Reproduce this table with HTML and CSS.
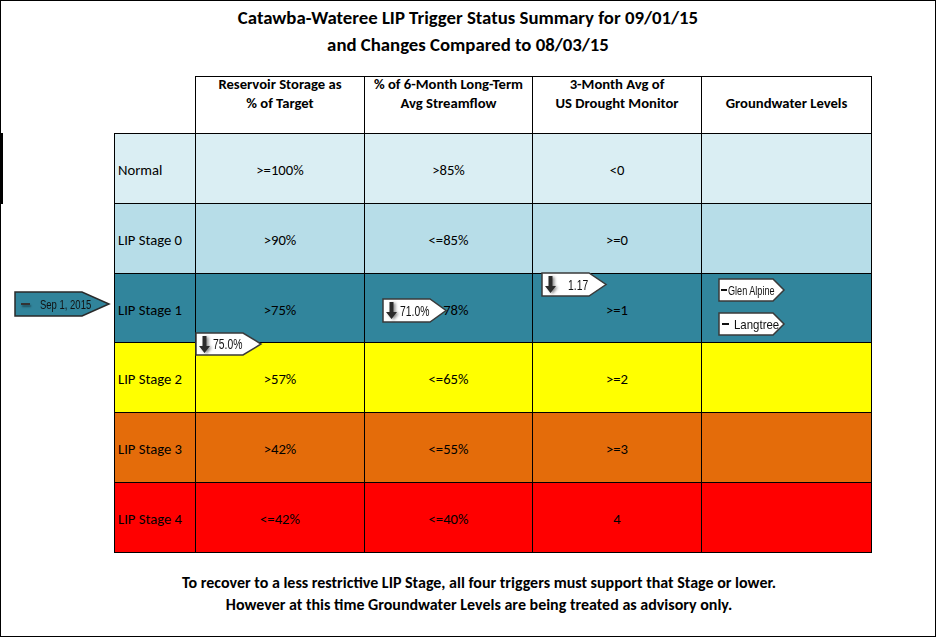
FILE: index.html
```html
<!DOCTYPE html>
<html>
<head>
<meta charset="utf-8">
<link rel="stylesheet" href="styles.css">
</head>
<body>
<div class="frame">
  <div class="edge-mark"></div>
  <h1 class="title">Catawba-Wateree LIP Trigger Status Summary for 09/01/15<br>and Changes Compared to 08/03/15</h1>
  <table class="grid">
    <colgroup>
      <col class="c-label"><col class="c-a"><col class="c-b"><col class="c-c"><col class="c-d">
    </colgroup>
    <tr class="head">
      <th class="corner"></th>
      <th><div class="hl">Reservoir Storage as<br>% of Target</div></th>
      <th><div class="hl">% of 6-Month Long-Term<br>Avg Streamflow</div></th>
      <th><div class="hl">3-Month Avg of<br>US Drought Monitor</div></th>
      <th><div class="hl"><br>Groundwater Levels</div></th>
    </tr>
    <tr class="r normal"><td class="lbl">Normal</td><td>&gt;=100%</td><td>&gt;85%</td><td>&lt;0</td><td></td></tr>
    <tr class="r s0"><td class="lbl">LIP Stage 0</td><td>&gt;90%</td><td>&lt;=85%</td><td>&gt;=0</td><td></td></tr>
    <tr class="r s1"><td class="lbl">LIP Stage 1</td><td>&gt;75%</td><td>&lt;=78%</td><td>&gt;=1</td><td></td></tr>
    <tr class="r s2"><td class="lbl">LIP Stage 2</td><td>&gt;57%</td><td>&lt;=65%</td><td>&gt;=2</td><td></td></tr>
    <tr class="r s3"><td class="lbl">LIP Stage 3</td><td>&gt;42%</td><td>&lt;=55%</td><td>&gt;=3</td><td></td></tr>
    <tr class="r s4"><td class="lbl">LIP Stage 4</td><td>&lt;=42%</td><td>&lt;=40%</td><td>4</td><td></td></tr>
  </table>
  <p class="note">To recover to a less restrictive LIP Stage, all four triggers must support that Stage or lower.<br>However at this time Groundwater Levels are being treated as advisory only.</p>

  <div class="tag tag-date">
    <svg class="shape" viewBox="0 0 96 26" preserveAspectRatio="none"><polygon points="1,1 68,1 95,13 68,25 1,25" /></svg>
    <span class="dash"></span><span class="txt">Sep 1, 2015</span>
  </div>

  <div class="tag tag-res">
    <svg class="shape" viewBox="0 0 67 24" preserveAspectRatio="none"><polygon points="1,1 48,1 66,12 48,23 1,23" /></svg>
    <svg class="arrow" viewBox="0 0 11 17"><path d="M3.5 0h4v10h3.5l-5.5 7l-5.5-7h3.5z"/></svg>
    <span class="txt">75.0%</span>
  </div>

  <div class="tag tag-flow">
    <svg class="shape" viewBox="0 0 65 25" preserveAspectRatio="none"><polygon points="1,1 48,1 64,12.5 48,24 1,24" /></svg>
    <svg class="arrow" viewBox="0 0 11 17"><path d="M3.5 0h4v10h3.5l-5.5 7l-5.5-7h3.5z"/></svg>
    <span class="txt">71.0%</span>
  </div>

  <div class="tag tag-dm">
    <svg class="shape" viewBox="0 0 66 25" preserveAspectRatio="none"><polygon points="1,1 48,1 65,12.5 48,24 1,24" /></svg>
    <svg class="arrow" viewBox="0 0 11 17"><path d="M3.5 0h4v10h3.5l-5.5 7l-5.5-7h3.5z"/></svg>
    <span class="txt">1.17</span>
  </div>

  <div class="tag tag-gw tag-glen">
    <svg class="shape" viewBox="0 0 67 24" preserveAspectRatio="none"><polygon points="1,1 55,1 66,12 55,23 1,23" /></svg>
    <span class="mini-dash"></span><span class="txt">Glen Alpine</span>
  </div>

  <div class="tag tag-gw tag-lang">
    <svg class="shape" viewBox="0 0 67 24" preserveAspectRatio="none"><polygon points="1,1 55,1 66,12 55,23 1,23" /></svg>
    <span class="mini-dash wide"></span><span class="txt">Langtree</span>
  </div>
</div>
</body>
</html>
```

FILE: styles.css
```css
html, body {
  margin: 0;
  padding: 0;
  background: #fff;
}

.frame {
  position: relative;
  box-sizing: border-box;
  width: 936px;
  height: 637px;
  border: 1px solid #000;
  font-family: Carlito, Lato, "Open Sans", sans-serif;
  color: #000;
}

.edge-mark {
  position: absolute;
  left: -1px;
  top: 132px;
  width: 3px;
  height: 71px;
  background: #000;
}

.title {
  margin: 0;
  padding-top: 3px;
  height: 75px;
  box-sizing: border-box;
  text-align: center;
  font-size: 18.8px;
  font-weight: 700;
  line-height: 27px;
}

.grid {
  margin-left: 113px;
  border-collapse: collapse;
  table-layout: fixed;
  width: 757px;
}

.c-label { width: 81px; }
.c-a { width: 169px; }
.c-b { width: 168px; }
.c-c { width: 169px; }
.c-d { width: 170px; }

.grid th,
.grid td {
  border: 1px solid #000;
  padding: 0;
  text-align: center;
  font-size: 14.67px;
}

.head { height: 57px; }

.grid th {
  vertical-align: top;
  font-weight: 700;
  line-height: 19px;
}

.hl {
  margin-top: -2px;
}

.grid th.corner {
  border-top: none;
  border-left: none;
}

.r { height: 70px; }
.r.s1 { height: 69px; }

.grid td {
  vertical-align: middle;
  padding-top: 3px;
}

.grid td.lbl {
  text-align: left;
  padding-left: 3px;
}

.normal td { background: #daeef3; }
.s0 td { background: #b7dde8; }
.s1 td { background: #31859c; }
.s2 td { background: #ffff00; }
.s3 td { background: #e46c0a; }
.s4 td { background: #ff0000; }

.note {
  margin: 19px 0 0;
  padding-left: 22px;
  text-align: center;
  font-size: 16px;
  font-weight: 700;
  line-height: 22px;
}

/* overlay markers */
.tag {
  position: absolute;
  display: flex;
  align-items: center;
  font-family: "Liberation Sans", Arial, sans-serif;
  font-size: 13px;
  color: #111;
  white-space: nowrap;
}

.tag .shape {
  position: absolute;
  left: 0;
  top: 0;
  width: 100%;
  height: 100%;
  overflow: visible;
}

.tag .shape polygon {
  fill: #fff;
  stroke: #3a3a3a;
  stroke-width: 1.5;
  vector-effect: non-scaling-stroke;
}

.tag .txt,
.tag .arrow,
.tag .dash,
.tag .mini-dash {
  position: relative;
}

.tag .txt {
  display: inline-block;
  transform: scaleX(0.74);
  transform-origin: left center;
}

.tag .arrow {
  flex: none;
  width: 11px;
  height: 17px;
  margin: 0 3px 0 4px;
  fill: #2b2b2b;
  filter: drop-shadow(2px 1px 1.5px rgba(0, 0, 0, 0.45));
}

.tag-date {
  left: 13px;
  top: 290px;
  width: 96px;
  height: 26px;
  font-size: 13px;
}

.tag-date .txt { transform: scaleX(0.73); }

.tag-date .shape polygon {
  fill: #31849b;
  stroke: #2a2a2a;
}

.tag-date .dash {
  flex: none;
  width: 9px;
  height: 2px;
  background: #333;
  margin: 0 10px 0 7px;
  box-shadow: 1px 2px 2px rgba(0, 0, 0, 0.4);
}

.tag-res {
  left: 194px;
  top: 331px;
  width: 67px;
  height: 24px;
  font-size: 14px;
}

.tag-flow {
  left: 381px;
  top: 297px;
  width: 65px;
  height: 25px;
  font-size: 14px;
}

.tag-dm {
  left: 540px;
  top: 271px;
  width: 66px;
  height: 25px;
  font-size: 14px;
}

.tag-dm .arrow { margin-right: 12px; }

.tag-gw {
  left: 717px;
  width: 67px;
  height: 24px;
  font-size: 13px;
}

.tag-glen { top: 277px; }
.tag-lang { top: 311px; }

.tag-glen .txt { transform: scaleX(0.7); }
.tag-lang .txt { transform: scaleX(0.88); }

.mini-dash {
  flex: none;
  display: inline-block;
  width: 6px;
  height: 2px;
  background: #111;
  margin: 0 1px 0 3px;
}

.mini-dash.wide {
  width: 7px;
  margin: 0 5px 0 4px;
}
```
